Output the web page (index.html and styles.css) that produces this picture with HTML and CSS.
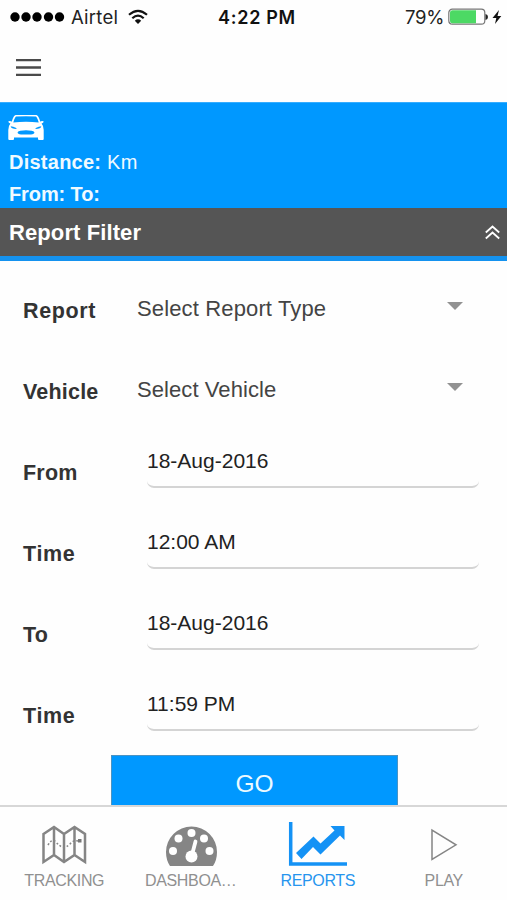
FILE: index.html
```html
<!DOCTYPE html>
<html lang="en">
<head>
<meta charset="utf-8">
<title>Report Filter</title>
<link rel="stylesheet" href="styles.css">
</head>
<body>
<div class="app">
  <div class="status">
    <div class="carrier">
      <svg width="55" height="12" viewBox="0 0 55 12"><g fill="#000"><circle cx="5" cy="6" r="4.7"/><circle cx="16" cy="6" r="4.7"/><circle cx="27" cy="6" r="4.7"/><circle cx="38.500" cy="6" r="4.700"/><circle cx="49.500" cy="6" r="4.700"/></g></svg>
      <span class="carrier-name">Airtel</span>
      <svg class="wifi" width="20" height="16" viewBox="0 0 20 16"><g fill="none" stroke="#111" stroke-width="2.200"><path d="M1 5.800Q10-2.200 19 5.800"/><path d="M4.300 9.300Q10 4 15.700 9.300"/></g><path d="M6.800 11.700Q10 8.800 13.200 11.700L10 15Z" fill="#111"/></svg>
    </div>
    <span class="clock">4:22 PM</span>
    <div class="power">
      <span class="percent">79%</span>
      <svg width="54" height="18" viewBox="0 0 54 18"><rect x=".8" y="1.200" width="36" height="15" rx="3.500" fill="#fff" stroke="#777" stroke-width="1.200"/><path d="M4.500 2.300H28V15.200H4.500Q2 15.200 2 12.700V4.800Q2 2.300 4.500 2.300Z" fill="#4cd964"/><path d="M37.500 6Q40 6.300 40 9T37.500 12Z" fill="#222"/><path d="M51 2L44.500 10H48.300L47 16L53.300 7.900H49.500Z" fill="#111"/></svg>
    </div>
  </div>
  <header class="topbar">
    <svg width="25" height="19" viewBox="0 0 25 19"><path d="M0 2.200H25M0 9.500H25M0 16.800H25" stroke="#4a4a4a" stroke-width="2.300"/></svg>
  </header>
  <section class="summary">
    <svg class="car" width="36" height="25" viewBox="0 0 36 25"><path fill="#fff" fill-rule="evenodd" d="M7.500 0Q18-1.200 28.500 0Q30 .4 31 3L32.400 6.800Q33 5.700 35.500 6.200Q36 8 33.600 8.600Q35.700 11 35.700 15V24Q35.700 25 34.700 25H31Q30 25 30 24V22.500H6V24Q6 25 5 25H1.300Q.3 25 .3 24V15Q.3 11 2.400 8.600Q0 8 .5 6.200Q3 5.700 3.600 6.800L5 3Q6 .4 7.500 0ZM8 1.600Q6.800 2.500 5.300 7.400Q18 6.300 30.700 7.400Q29.200 2.500 28 1.600Q18 .8 8 1.600ZM2.700 11.200Q3 13.800 8.500 13.900Q9 12.500 2.700 11.200ZM33.300 11.200Q33 13.800 27.500 13.900Q27 12.500 33.300 11.200ZM9.600 17.200Q9.500 19.300 13 19.500H23Q26.500 19.300 26.400 17.200Q25 15.300 18 15.300T9.600 17.200Z"/></svg>
    <div class="line distance"><b>Distance:</b> Km</div>
    <div class="line from-to"><b>From: To:</b></div>
  </section>
  <div class="filter-head">
    <span class="filter-title">Report Filter</span>
    <svg width="15" height="15" viewBox="0 0 15 15"><path d="M.8 7.500L7.500 1.500L14.200 7.500M.8 13.500L7.500 7.500L14.200 13.500" fill="none" stroke="#fff" stroke-width="1.800"/></svg>
  </div>
  <main class="form">
    <div class="row"><span class="label report">Report</span><div class="select"><span class="report-type">Select Report Type</span><i class="caret"></i></div></div>
    <div class="row"><span class="label">Vehicle</span><div class="select"><span>Select Vehicle</span><i class="caret"></i></div></div>
    <div class="row"><span class="label">From</span><div class="field">18-Aug-2016</div></div>
    <div class="row"><span class="label time-label">Time</span><div class="field">12:00 AM</div></div>
    <div class="row"><span class="label">To</span><div class="field">18-Aug-2016</div></div>
    <div class="row"><span class="label time-label">Time</span><div class="field">11:59 PM</div></div>
    <button class="go">GO</button>
  </main>
  <nav class="tabs">
    <div class="tab">
      <svg width="60" height="48" viewBox="0 0 60 48"><path d="M9.500 14L20 7L30 14L40.500 7L51 14V42L40.500 35L30 42L20 35L9.500 42ZM20 7V35M30 14V42M40.500 7V35" fill="none" stroke="#858585" stroke-width="2.500"/><path d="M14 25Q18 18 22 22Q29 31 36 24Q39 20 44 21" fill="none" stroke="#858585" stroke-width="1.600" stroke-dasharray="1.800 2"/><rect x="44" y="19" width="3.500" height="3.500" fill="#777"/></svg>
      <span class="tab-name">TRACKING</span>
    </div>
    <div class="tab">
      <svg width="60" height="48" viewBox="0 0 60 48"><path d="M9 46Q5 40 5 32A25.500 25.500 0 0 1 56 32Q56 40 52 46Z" fill="#858585"/><g fill="#fff"><circle cx="12" cy="31" r="4"/><circle cx="17.500" cy="18.500" r="4"/><circle cx="30.500" cy="13" r="4"/><circle cx="43" cy="18.500" r="4"/><circle cx="48.500" cy="31" r="4"/><circle cx="30.500" cy="36.500" r="6"/></g><path d="M31.500 33L34.500 21.500" stroke="#fff" stroke-width="3.800" stroke-linecap="round"/></svg>
      <span class="tab-name">DASHBOA…</span>
    </div>
    <div class="tab active">
      <svg width="60" height="48" viewBox="0 0 60 48"><path d="M2.700 2V44H59" fill="none" stroke="#1492f5" stroke-width="3.500"/><path d="M8 33L25.500 16.500L32.500 23.500L46.500 10.500L42.500 6H56.500V20L52 15.500L32.500 34.500L25 27L13.500 39Z" fill="#1492f5"/></svg>
      <span class="tab-name">REPORTS</span>
    </div>
    <div class="tab">
      <svg width="60" height="48" viewBox="0 0 60 48"><path d="M18 10V39.500L42 24.800Z" fill="none" stroke="#858585" stroke-width="1.500"/></svg>
      <span class="tab-name">PLAY</span>
    </div>
  </nav>
</div>
</body>
</html>
```
FILE: styles.css
```css
* { box-sizing: border-box; }
body { margin: 0; background: #fefefe; font-family: "Liberation Sans", Arial, sans-serif; color: #333; }
svg { display: block; flex: none; }
.app { width: 507px; height: 900px; display: flex; flex-direction: column; overflow: hidden; }
.status { height: 34px; flex: none; display: grid; grid-template-columns: 1fr auto 1fr; align-items: center; padding: 0 5px 0 10px; font-family: Inter, sans-serif; color: #222; }
.carrier, .power { display: flex; align-items: center; }
.carrier-name { margin-left: 6px; font-size: 18.5px; letter-spacing: .25px; }
.wifi { margin-left: 10px; }
.clock { font-size: 18px; font-weight: 600; color: #111; padding-left: 2px; letter-spacing: .7px; }
.power { justify-content: flex-end; gap: 4px; }
.percent { font-size: 18.5px; letter-spacing: -.3px; }
.topbar { height: 68px; flex: none; padding: 24px 16px; }
.summary { height: 106px; flex: none; background: #0098ff; color: #f0faff; padding: 12px 8px 0; border-top: 1px solid #35adff; }
.line { margin-left: 1px; height: 32px; line-height: 32px; font-size: 20px; letter-spacing: .25px; }
.distance { margin-top: 6px; }
.from-to { letter-spacing: -.1px; }
.filter-head { height: 53px; flex: none; background: #555; border-bottom: 5px solid #1492ef; display: flex; align-items: center; justify-content: space-between; padding: 1px 7px 0 9px; }
.filter-title { font-size: 22px; font-weight: bold; color: #fff; letter-spacing: .1px; }
.form { flex: 1; min-height: 0; overflow: hidden; padding-top: 8px; }
.row { height: 81px; display: flex; align-items: center; padding-left: 23px; }
.label { width: 114px; padding-top: 3px; font-size: 21.5px; font-weight: bold; letter-spacing: .2px; }
.report, .time-label { letter-spacing: .65px; }
.select { width: 326px; padding-bottom: 1px; display: flex; align-items: center; justify-content: space-between; font-size: 22px; letter-spacing: .08px; color: #444; }
.report-type { letter-spacing: .14px; }
.caret { border: 8px solid transparent; border-top: 8px solid #929292; border-bottom: 0; margin-bottom: 6px; }
.field { width: 332px; height: 54px; margin: 0 0 22px 10px; border-bottom: 2px solid #d4d4d4; border-radius: 7px; line-height: 54px; font-size: 21px; color: #222; }
.go { display: block; width: 287px; height: 58px; margin: 0 0 0 111px; border: 1px solid #4c93c2; background: #0098ff; color: #ecfaff; font: 24.5px "Liberation Sans", sans-serif; padding: 0; }
.tabs { height: 95px; flex: none; border-top: 2px solid #d7d7d7; display: flex; padding-left: 1px; }
.tab { width: 127px; padding-top: 13px; display: flex; flex-direction: column; align-items: center; color: #909090; }
.tab-name { margin-top: 2px; font-size: 16px; line-height: 22px; letter-spacing: -.35px; }
.active { color: #2695ee; padding-left: 1px; }
```
